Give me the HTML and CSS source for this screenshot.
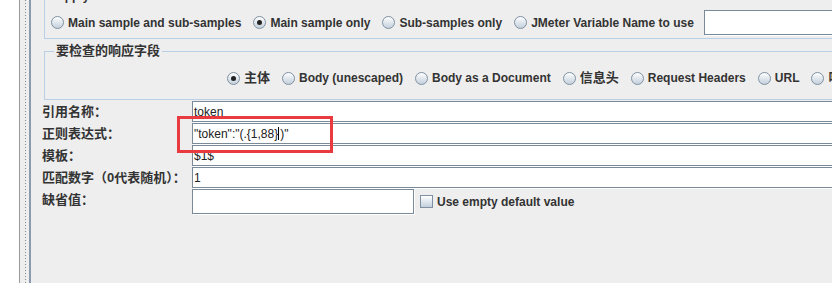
FILE: index.html
```html
<!DOCTYPE html>
<html lang="zh-CN">
<head>
    <meta charset="UTF-8">
    <title>正则表达式提取器</title>
    <link rel="stylesheet" href="styles.css">
</head>
<body>
    <div class="window">
        <div class="tree"></div>
        <div class="splitter"></div>
        <div class="panel">
            <fieldset class="group apply">
                <legend>Apply to:</legend>
                <div class="options">
                    <label class="opt"><span class="radio"></span>Main sample and sub-samples</label>
                    <label class="opt"><span class="radio on"></span>Main sample only</label>
                    <label class="opt"><span class="radio"></span>Sub-samples only</label>
                    <label class="opt"><span class="radio"></span>JMeter Variable Name to use</label>
                    <span class="field var-field"></span>
                </div>
            </fieldset>

            <fieldset class="group check-fields">
                <legend class="zh">要检查的响应字段</legend>
                <div class="options shifted">
                    <label class="opt"><span class="radio on"></span><span class="zh">主体</span></label>
                    <label class="opt"><span class="radio"></span>Body (unescaped)</label>
                    <label class="opt"><span class="radio"></span>Body as a Document</label>
                    <label class="opt"><span class="radio"></span><span class="zh">信息头</span></label>
                    <label class="opt"><span class="radio"></span>Request Headers</label>
                    <label class="opt"><span class="radio"></span>URL</label>
                    <label class="opt"><span class="radio"></span><span class="zh">响应代码</span></label>
                    <label class="opt"><span class="radio"></span><span class="zh">响应信息</span></label>
                </div>
            </fieldset>

            <div class="form">
                <div class="row">
                    <span class="label zh">引用名称：</span>
                    <span class="field">token</span>
                </div>
                <div class="row">
                    <span class="label zh">正则表达式：</span>
                    <span class="field">"token":"(.{1,88}<span class="caret"></span>)"</span>
                </div>
                <div class="row">
                    <span class="label zh">模板：</span>
                    <span class="field">$1$</span>
                </div>
                <div class="row">
                    <span class="label zh">匹配数字（0代表随机）：</span>
                    <span class="field">1</span>
                </div>
                <div class="row last">
                    <span class="label zh">缺省值：</span>
                    <span class="field short"></span>
                    <label class="check"><span class="box"></span>Use empty default value</label>
                </div>
            </div>
        </div>
        <div class="mark"></div>
    </div>
</body>
</html>
```

FILE: styles.css
```css
body {
    margin: 0;
    font-family: 'Liberation Sans', 'Noto Sans CJK SC', sans-serif;
    font-size: 12px;
    font-weight: bold;
    color: #333;
    background: #eeeeee;
    overflow: hidden;
}

.window {
    position: relative;
    display: flex;
    height: 283px;
    overflow: hidden;
}

.zh {
    font-size: 13px;
}

.tree {
    flex: 0 0 19px;
    background: #fff;
    border-right: 1px solid #9a9a9a;
}

.splitter {
    flex: 0 0 9px;
    background:
        repeating-linear-gradient(to bottom, #8c8c8c 0 1px, transparent 1px 3px) 5px 0 / 1px 100% no-repeat,
        #eeeeee;
    border-right: 2px solid #8a9bb0;
}

.panel {
    flex: 1;
    padding-left: 11px;
    overflow: hidden;
}

.group {
    width: 1000px;
    margin: 0 0 0 2px;
    padding: 0 0 0 6px;
    border: 1px solid #b8cfe5;
    min-width: 0;
}

.group legend {
    padding: 0 2px;
    margin-left: 3px;
    line-height: 14px;
}

.apply {
    margin-top: -11px;
    padding-top: 7px;
    padding-bottom: 3px;
}

.check-fields {
    margin-top: 5px;
    padding-top: 12px;
    padding-bottom: 13px;
}

.options {
    display: flex;
    align-items: center;
    gap: 12px;
    white-space: nowrap;
}

.shifted {
    padding-left: 176px;
}

.opt {
    display: flex;
    align-items: center;
    gap: 4px;
    line-height: 16px;
}

.radio {
    position: relative;
    width: 11px;
    height: 11px;
    border: 1px solid #7f90a2;
    border-radius: 50%;
    background: linear-gradient(#ffffff, #e3e9ef 45%, #c4d0dc);
}

.radio.on::after {
    content: "";
    position: absolute;
    left: 3px;
    top: 3px;
    width: 5px;
    height: 5px;
    border-radius: 50%;
    background: #222;
}

.field {
    display: block;
    box-sizing: border-box;
    height: 21px;
    padding: 0 1px;
    border: 1px solid #7a8a99;
    box-shadow: 1px 1px 0 #fff;
    background: #fff;
    font-weight: normal;
    color: #222;
    line-height: 20px;
    white-space: nowrap;
}

.var-field {
    width: 200px;
    height: 25px;
    margin-left: -2px;
}

.form {
    width: 1000px;
    margin-top: 1px;
}

.row {
    display: grid;
    grid-template-columns: 150px 1fr;
    align-items: start;
    height: 22px;
}

.label {
    line-height: 22px;
}

.row.last {
    grid-template-columns: 150px 222px 1fr;
    height: 26px;
}

.row.last .field {
    height: 25px;
}

.caret {
    display: inline-block;
    width: 1px;
    height: 13px;
    margin: 0 1px 0 0;
    vertical-align: -2px;
    background: #000;
}

.check {
    display: flex;
    align-items: center;
    gap: 4px;
    height: 25px;
    padding-left: 6px;
}

.box {
    width: 11px;
    height: 11px;
    border: 1px solid #7f90a2;
    background: linear-gradient(#ffffff, #e3e9ef 45%, #c4d0dc);
}

.mark {
    position: absolute;
    left: 177px;
    top: 116px;
    width: 150px;
    height: 31px;
    border: 3px solid #e83a3f;
}
```
